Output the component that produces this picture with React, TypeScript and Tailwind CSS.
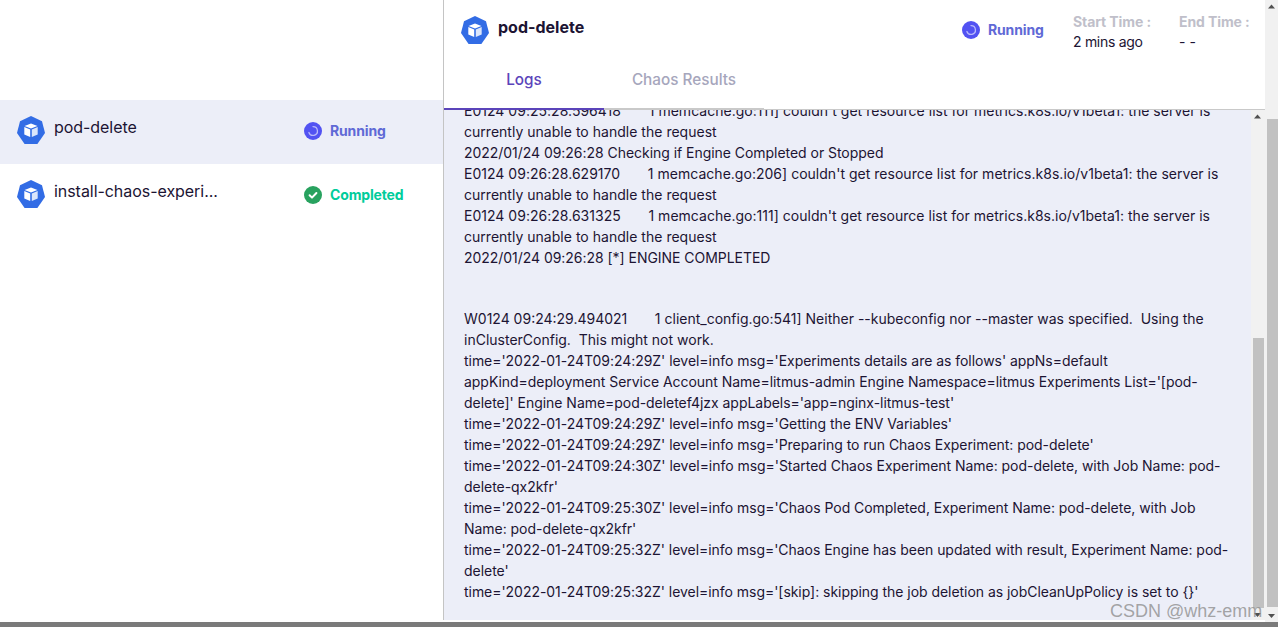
const engineLogs = [
  { text: "E0124 09:25:28.596418       1 memcache.go:111] couldn't get resource list for metrics.k8s.io/v1beta1: the server is currently unable to handle the request", wide: true },
  { text: "2022/01/24 09:26:28 Checking if Engine Completed or Stopped", wide: false },
  { text: "E0124 09:26:28.629170       1 memcache.go:206] couldn't get resource list for metrics.k8s.io/v1beta1: the server is currently unable to handle the request", wide: true },
  { text: "E0124 09:26:28.631325       1 memcache.go:111] couldn't get resource list for metrics.k8s.io/v1beta1: the server is currently unable to handle the request", wide: true },
];

const experimentLogs = `time='2022-01-24T09:24:29Z' level=info msg='Experiments details are as follows' appNs=default appKind=deployment Service Account Name=litmus-admin Engine Namespace=litmus Experiments List='[pod-delete]' Engine Name=pod-deletef4jzx appLabels='app=nginx-litmus-test'
time='2022-01-24T09:24:29Z' level=info msg='Getting the ENV Variables'
time='2022-01-24T09:24:29Z' level=info msg='Preparing to run Chaos Experiment: pod-delete'
time='2022-01-24T09:24:30Z' level=info msg='Started Chaos Experiment Name: pod-delete, with Job Name: pod-delete-qx2kfr'
time='2022-01-24T09:25:30Z' level=info msg='Chaos Pod Completed, Experiment Name: pod-delete, with Job Name: pod-delete-qx2kfr'
time='2022-01-24T09:25:32Z' level=info msg='Chaos Engine has been updated with result, Experiment Name: pod-delete'
time='2022-01-24T09:25:32Z' level=info msg='[skip]: skipping the job deletion as jobCleanUpPolicy is set to {}'`;

function PodIcon() {
  return (
    <svg width="28" height="28" viewBox="0 0 28 28" className="shrink-0">
      <path d="M14 0 L25 5.3 L28 17 L20.4 28 L7.6 28 L0 17 L3 5.3 Z" fill="#326ce5" />
      <path d="M14 7.5 L20.5 10 L14 12.5 L7.5 10 Z" fill="#fff" />
      <path d="M7.3 11 L13.2 13.4 V21 L7.3 18.4 Z" fill="#fff" />
      <path d="M20.7 11 L14.8 13.4 V21 L20.7 18.4 Z" fill="#dbe6fb" />
    </svg>
  );
}

function RunningIcon() {
  return (
    <svg width="18" height="18" viewBox="0 0 18 18" className="shrink-0">
      <circle cx="9" cy="9" r="9" fill="#5252f2" />
      <path d="M9 4.6 A4.4 4.4 0 1 1 4.9 10.5" fill="none" stroke="#b9b9fa" strokeWidth="1.3" strokeLinecap="round" />
    </svg>
  );
}

function CompletedIcon() {
  return (
    <svg width="18" height="18" viewBox="0 0 18 18" className="shrink-0">
      <circle cx="9" cy="9" r="9" fill="#28a25f" />
      <path d="M5.6 9.3 L8 11.6 L12.4 7" fill="none" stroke="#fff" strokeWidth="2" strokeLinecap="round" strokeLinejoin="round" />
    </svg>
  );
}

function Arrow({ down }: { down?: boolean }) {
  return (
    <svg width="13" height="13" viewBox="0 0 13 13" className="shrink-0">
      <path d={down ? "M3 5 H10 L6.5 9 Z" : "M3 8.5 H10 L6.5 4.5 Z"} fill="#505050" />
    </svg>
  );
}

function PodRow({ name, active, status }: { name: string; active?: boolean; status: "Running" | "Completed" }) {
  return (
    <div className={`flex h-16 pl-[17px] pt-4 ${active ? "bg-[#eceef8]" : "bg-white"}`}>
      <PodIcon />
      <span className="ml-[9px] w-[250px] text-base leading-[22px] tracking-[-0.05px] text-[#1c1433]">{name}</span>
      <div className="mt-[5px] flex h-[20px] items-center gap-2">
        {status === "Running" ? <RunningIcon /> : <CompletedIcon />}
        <span className={`text-sm font-bold tracking-[-0.15px] ${status === "Running" ? "text-[#5f69d6]" : "text-[#00cc9b]"}`}>{status}</span>
      </div>
    </div>
  );
}

export default function App() {
  return (
    <div className="relative h-[627px] w-[1278px] overflow-hidden bg-white font-['Inter',sans-serif]">
      <div className="flex h-[622px]">
        <aside className="w-[443px] shrink-0 pt-[100px]">
          <PodRow name="pod-delete" active status="Running" />
          <PodRow name="install-chaos-experi..." status="Completed" />
        </aside>

        <section className="flex h-[620px] w-[822px] shrink-0 flex-col border-l border-[#c4c4c4]">
          <header className="h-[110px] shrink-0 bg-white">
            <div className="flex h-[63px]">
              <div className="flex pl-[17px] pt-4">
                <PodIcon />
                <span className="ml-[9px] w-[464px] text-base font-bold leading-[22px] text-[#1c1433]">pod-delete</span>
              </div>
              <div className="mt-5 flex h-[20px] items-center gap-2">
                <RunningIcon />
                <span className="w-[85px] text-sm font-bold tracking-[-0.15px] text-[#5f69d6]">Running</span>
              </div>
              <div className="w-[106px] pt-[11px] text-sm leading-[21px]">
                <p className="font-bold tracking-[-0.1px] text-[#c0bfca]">Start Time :</p>
                <p className="-mt-px tracking-[-0.3px] text-[#1c1433]">2 mins ago</p>
              </div>
              <div className="pt-[11px] text-sm leading-[21px]">
                <p className="font-bold tracking-[-0.1px] text-[#c0bfca]">End Time :</p>
                <p className="-mt-px text-[#1c1433]">- -</p>
              </div>
            </div>
            <div className="flex h-[47px]">
              <div className="flex w-[160px] items-start justify-center border-b-2 border-[#5b44ba] pt-[5px] text-[15.3px] font-medium leading-[24px] text-[#5b44ba]">Logs</div>
              <div className="flex w-[160px] items-start justify-center border-b-2 border-[#c9c9c9] pt-[5px] text-[15.3px] font-medium leading-[24px] text-[#a6a6bc]">Chaos Results</div>
              <div className="flex-1 border-b border-[#c9c9c9]" />
            </div>
          </header>
          <div className="flex min-h-0 flex-1">
            <div className="min-w-0 flex-1 overflow-hidden bg-[#eceef8] pl-5 pr-5 text-sm leading-[21px] tracking-[-0.04px] text-[#1c1433]">
              <div className="-mt-[10px]">
                {engineLogs.map((line, i) => (
                  <p key={i} className={`whitespace-pre-wrap ${line.wide ? "tracking-[0.02px]" : ""}`}>{line.text}</p>
                ))}
              </div>
              <p>2022/01/24 09:26:28 [*] ENGINE COMPLETED</p>
              <p className="mt-10 whitespace-pre-wrap tracking-normal">W0124 09:24:29.494021       1 client_config.go:541] Neither --kubeconfig nor --master was specified.  Using the inClusterConfig.  This might not work.</p>
              <p className="whitespace-pre-wrap">{experimentLogs}</p>
            </div>
            <div className="flex w-[14px] shrink-0 flex-col bg-[#f1f1f1]">
              <Arrow />
              <div className="h-[215px] shrink-0" />
              <div className="mx-auto h-[270px] w-[11px] shrink-0 bg-[#c1c1c1]" />
              <div className="flex-1" />
              <Arrow down />
            </div>
          </div>
        </section>

        <div className="flex w-[13px] shrink-0 flex-col bg-[#f1f1f1]">
          <Arrow />
          <div className="h-[106px] shrink-0" />
          <div className="ml-[2px] h-[488px] w-[11px] shrink-0 bg-[#c1c1c1]" />
          <div className="flex-1" />
          <Arrow down />
        </div>
      </div>
      <div className="h-[5px] bg-[#7a7a7a]" />

      <span className="absolute left-[1110px] top-[599px] font-['Liberation_Sans',sans-serif] text-[18px] leading-6 text-[#8f8f8f]/80">CSDN @whz-emm</span>
    </div>
  );
}
